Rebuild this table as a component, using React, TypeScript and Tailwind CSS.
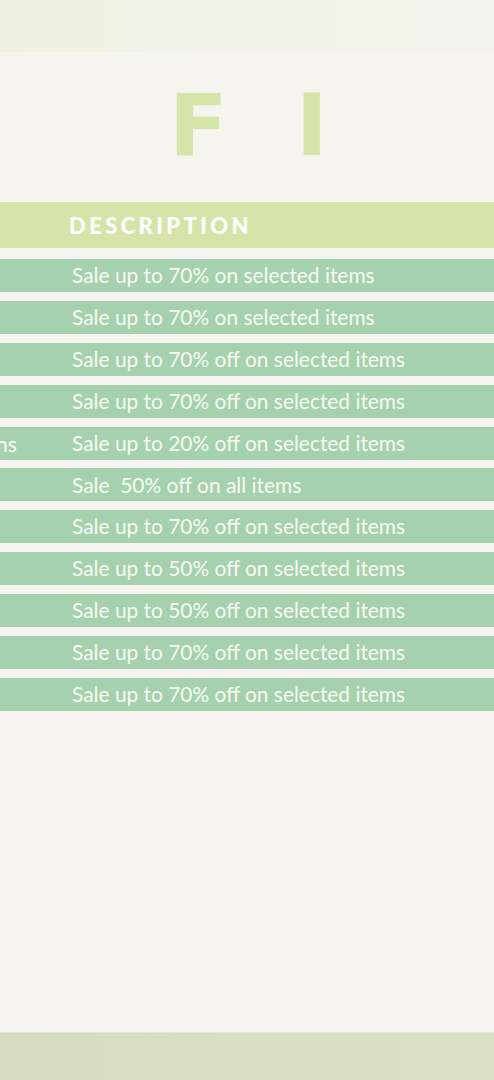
import React from 'react';

const deals: { left: string; text: string }[] = [
  { left: '', text: 'Sale up to 70% on selected items' },
  { left: '', text: 'Sale up to 70% on selected items' },
  { left: '', text: 'Sale up to 70% off on selected items' },
  { left: '', text: 'Sale up to 70% off on selected items' },
  { left: 'ns', text: 'Sale up to 20% off on selected items' },
  { left: '', text: 'Sale  50% off on all items' },
  { left: '', text: 'Sale up to 70% off on selected items' },
  { left: '', text: 'Sale up to 50% off on selected items' },
  { left: '', text: 'Sale up to 50% off on selected items' },
  { left: '', text: 'Sale up to 70% off on selected items' },
  { left: '', text: 'Sale up to 70% off on selected items' },
];

const App: React.FC = () => {
  return (
    <div className="w-[494px] h-[1080px] overflow-hidden bg-[#f5f4ef] flex flex-col font-['Lato','Open_Sans',sans-serif]">
      {/* Top band */}
      <div className="h-[52px] shrink-0 bg-gradient-to-r from-[#eef1e2] via-[#f1f3ea] to-[#f2f3ec]" />

      {/* Title */}
      <div className="h-[150px] shrink-0 flex items-start pt-[30px] pl-[169px] gap-[68px] text-[#d5e4a9] font-['DejaVu_Sans',sans-serif] font-bold text-[86px] leading-none">
        <span>F</span>
        <span>I</span>
      </div>

      {/* Table header */}
      <div className="h-[46px] shrink-0 bg-[#d5e5aa] flex items-center pl-[69px]">
        <span className="text-white font-black text-[22px] tracking-[3.4px] uppercase">Description</span>
      </div>

      {/* Rows */}
      <div className="flex flex-col gap-[8.9px] pt-[11px]">
        {deals.map((d, i) => (
          <div key={i} className="relative h-[33px] bg-[#a6d1af] flex items-center pl-[72px]">
            {d.left && (
              <span className="absolute left-[-4px] text-[#f7fbf2] text-[21px] leading-none">{d.left}</span>
            )}
            <span className="text-[#f7fbf2] text-[20.9px] leading-none whitespace-pre">{d.text}</span>
          </div>
        ))}
      </div>

      <div className="flex-1" />

      {/* Bottom band */}
      <div className="h-[48px] shrink-0 bg-gradient-to-r from-[#d6dcbd] via-[#d8e0c2] to-[#dbe1c3] border-t border-[#e5e6d8]" />
    </div>
  );
};

export default App;
